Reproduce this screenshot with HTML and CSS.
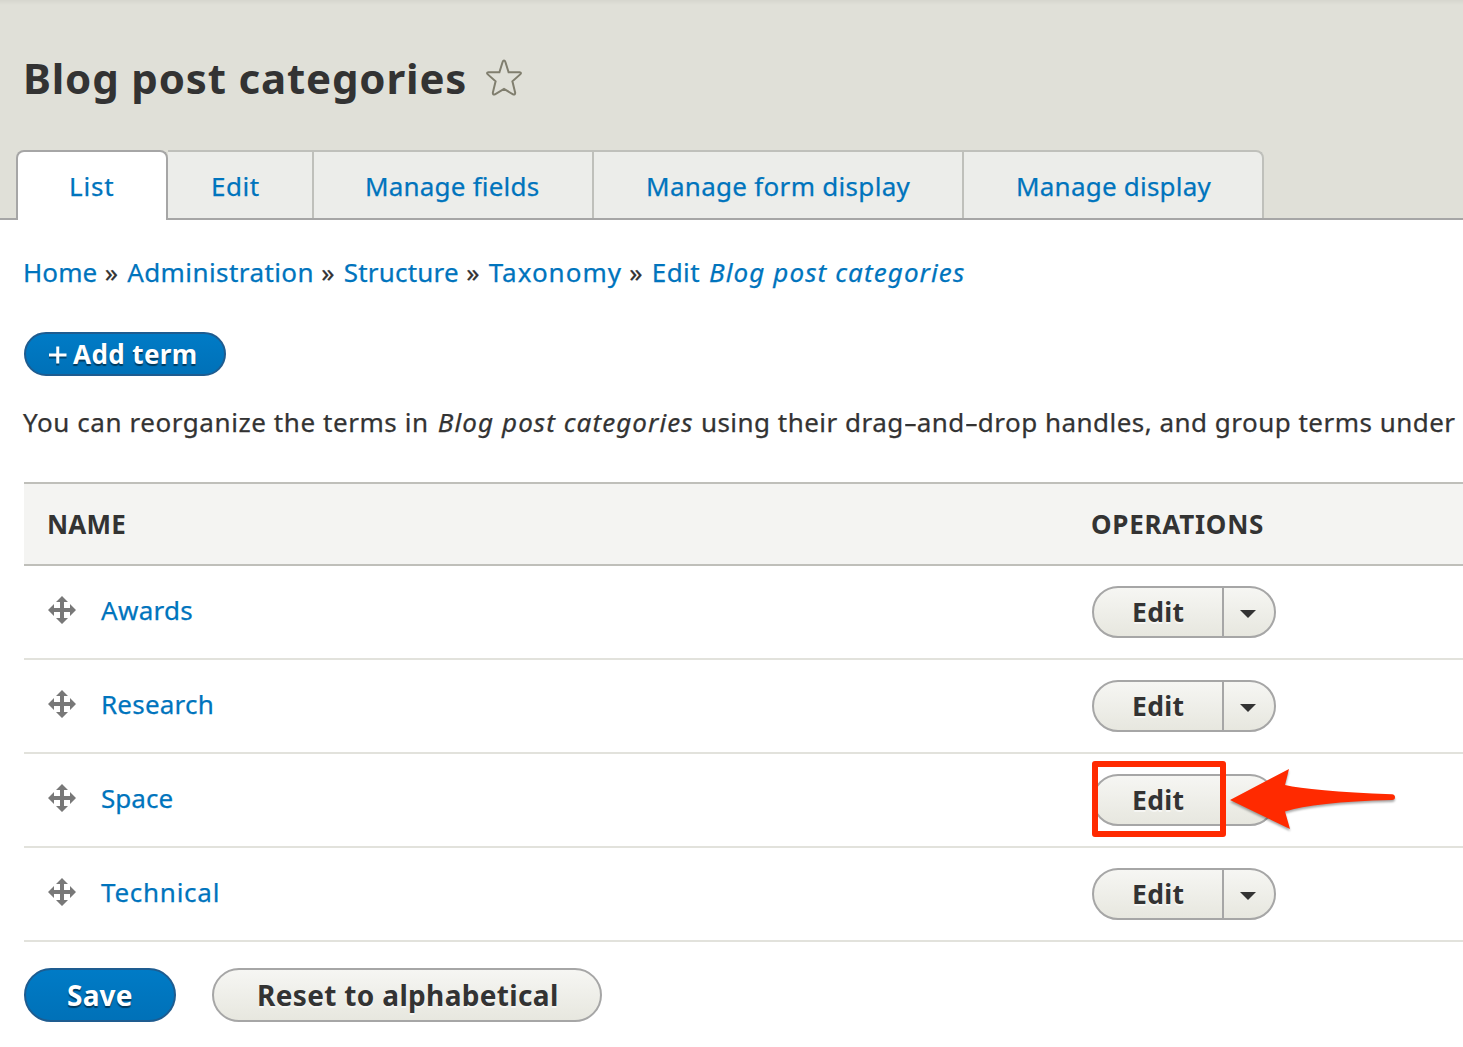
FILE: index.html
```html
<!DOCTYPE html>
<html lang="en">
<head>
<meta charset="utf-8">
<title>Blog post categories</title>
<link rel="stylesheet" href="styles.css">
</head>
<body>
<svg class="defs" width="0" height="0" aria-hidden="true">
  <symbol id="move" viewBox="0 0 28 28"><path d="M14 0L20 6H16V12H22V8L28 14L22 20V16H16V22H20L14 28L8 22H12V16H6V20L0 14L6 8V12H12V6H8Z"/></symbol>
</svg>
<header class="page-header">
  <div class="title-row">
    <h1 class="page-title">Blog post categories</h1>
    <svg class="star" width="40" height="40" viewBox="0 0 40 40" aria-hidden="true"><path d="M20 2.500Q20.900 2.500 21.400 4L24.600 14.300H35.600Q38 14.500 36.200 16.400L28.400 23.300L31.200 34.800Q31.200 37.300 29 36.300L20 31L11 36.300Q8.800 37.300 8.800 34.800L11.600 23.300L3.800 16.400Q2 14.500 4.400 14.300H15.400L18.600 4Q19.100 2.500 20 2.500Z"/></svg>
  </div>
  <nav class="tabs">
    <a class="tab tab-list active">List</a>
    <a class="tab tab-edit">Edit</a>
    <a class="tab tab-fields">Manage fields</a>
    <a class="tab tab-form">Manage form display</a>
    <a class="tab tab-display">Manage display</a>
  </nav>
</header>
<main class="content">
  <nav class="breadcrumb"><a class="bc-home">Home</a><span class="sep">»</span><a class="bc-admin">Administration</a><span class="sep">»</span><a class="bc-structure">Structure</a><span class="sep">»</span><a class="bc-taxonomy">Taxonomy</a><span class="sep">»</span><a class="bc-edit">Edit <em>Blog post categories</em></a></nav>
  <a class="button primary add"><svg class="plus" width="18" height="20" viewBox="0 0 18 20" aria-hidden="true"><path d="M0 11H17.500M8.750 2.500V19.500"/></svg>Add term</a>
  <p class="help"><span class="lead">You can reorganize the terms in</span> <em>Blog post categories</em> using their drag<span class="hyphen">-</span>and<span class="hyphen">-</span>drop handles, and group terms under</p>
  <div class="table">
    <div class="row head"><span class="name">NAME</span><span class="ops">OPERATIONS</span></div>
    <div class="row">
      <div class="name"><svg class="handle" width="28" height="28"><use href="#move"/></svg><a class="term awards">Awards</a></div>
      <div class="dropbutton"><a class="edit">Edit</a><span class="toggle"></span></div>
    </div>
    <div class="row">
      <div class="name"><svg class="handle" width="28" height="28"><use href="#move"/></svg><a class="term research">Research</a></div>
      <div class="dropbutton"><a class="edit">Edit</a><span class="toggle"></span></div>
    </div>
    <div class="row">
      <div class="name"><svg class="handle" width="28" height="28"><use href="#move"/></svg><a class="term space">Space</a></div>
      <div class="dropbutton"><a class="edit">Edit</a><span class="toggle"></span>
        <span class="highlight"></span>
        <svg class="pointer" width="172" height="70" viewBox="0 0 172 70" aria-hidden="true"><path d="M2 35L61 4L57 20Q82 26 164 29.300Q167 29.700 167 32.300Q167 35 164 35Q86 37 57 46.500L62 64Z"/></svg>
      </div>
    </div>
    <div class="row">
      <div class="name"><svg class="handle" width="28" height="28"><use href="#move"/></svg><a class="term technical">Technical</a></div>
      <div class="dropbutton"><a class="edit">Edit</a><span class="toggle"></span></div>
    </div>
  </div>
  <div class="actions"><a class="button primary save">Save</a><a class="button reset">Reset to alphabetical</a></div>
</main>
</body>
</html>
```
FILE: styles.css
```css
*{box-sizing:border-box}
html{overflow:hidden}
body{margin:0;font:26px/36px "Noto Sans",sans-serif;color:#333;background:#fff}
a{color:#0074bd;text-decoration:none}
.defs{display:block;height:0}

.page-header{height:220px;padding:50px 0 0 16px;border-bottom:2px solid #a6a6a6;background:linear-gradient(#d6d6ce,#e0e0d8 5px)}
.title-row{display:flex;align-items:center;height:56px;padding-left:7px;margin-bottom:44px}
.page-title{width:461px;margin:0;font-size:42px;line-height:56px;font-weight:700;letter-spacing:.83px;white-space:nowrap}
.star{fill:none;stroke:#807e6e;stroke-width:2;flex:none}

.tabs{display:flex;height:70px}
.tab{height:68px;padding-top:1px;line-height:67px;border-top:2px solid #bfc0bb;border-right:2px solid #bfc0bb;background:#ecedea;white-space:nowrap}
.tab.active{height:70px;border:2px solid #a6a6a6;border-bottom:0;border-radius:8px 8px 0 0;background:#fff}
.tab-list{width:152px;padding-left:51px;letter-spacing:.8px}
.tab-edit{width:146px;padding-left:43px;letter-spacing:.5px}
.tab-fields{width:280px;padding-left:51px;letter-spacing:.2px}
.tab-form{width:370px;padding-left:52px;letter-spacing:.3px}
.tab-display{width:300px;padding-left:52px;letter-spacing:.22px;border-top-right-radius:8px}
.tab,.breadcrumb,.help,.term{-webkit-text-stroke:.25px currentColor}

.content{padding:34px 0 0 24px}
.breadcrumb{display:flex;margin-left:-1px;white-space:nowrap}
.sep{width:29.8px;padding-right:2px;text-align:center}
.bc-home{letter-spacing:.1px}
.bc-admin{letter-spacing:.42px}
.bc-structure{letter-spacing:.2px}
.bc-taxonomy{letter-spacing:1px}
.bc-edit{letter-spacing:.4px}
.bc-edit em{margin-left:2px;letter-spacing:1.1px}

.button{display:inline-flex;align-items:center;height:54px;border:2px solid #a6a6a6;border-radius:27px;background:linear-gradient(#f6f6f3,#e7e7df);color:#333;font-size:28px;font-weight:700;text-shadow:0 2px 0 rgba(255,255,255,.6);white-space:nowrap}
.button.primary{border-color:#1e5c90;background:linear-gradient(#007bc6,#0071b8);color:#fff;text-shadow:0 2px 1px rgba(0,0,0,.5)}
.add{display:flex;width:202px;height:44px;margin-top:42px;padding-left:23px;font-size:26px;letter-spacing:.4px}
.plus{margin-right:6px;fill:none;stroke:#fff;stroke-width:3;filter:drop-shadow(0 2px 0 rgba(0,0,0,.4))}

.help{margin:28px 0 42px -1px;letter-spacing:.48px;white-space:nowrap}
.lead{letter-spacing:.57px}
.help em{margin-left:2px;letter-spacing:1.08px}
.hyphen{display:inline-block;width:13px;text-align:center;letter-spacing:0;transform:scaleX(1.6)}

.row{display:grid;grid-template-columns:1044px 1fr;align-items:center;height:94px;padding-left:24px;border-bottom:2px solid #e2e2dc}
.row.head{height:84px;border-top:2px solid #bfbfba;border-bottom-color:#bfbfba;background:#f4f4f2;font-weight:700}
.head .name{margin-left:-1px;letter-spacing:.2px}
.head .ops{margin-left:-1px;letter-spacing:.75px}
div.name{display:flex;align-items:center;gap:25px;padding-bottom:4px}
.handle{fill:#787878}
.awards{letter-spacing:.3px}
.research{letter-spacing:.2px}
.space{letter-spacing:.05px}
.technical{letter-spacing:.75px}

.dropbutton{position:relative;display:flex;width:184px;height:52px;border:2px solid #a6a6a6;border-radius:26px;background:linear-gradient(#f6f6f3,#e7e7df)}
.edit{width:130px;padding-left:38px;border-right:2px solid #a6a6a6;color:#333;font-size:26.5px;line-height:49px;font-weight:700;letter-spacing:.3px;text-shadow:0 2px 0 rgba(255,255,255,.6)}
.toggle{width:16px;height:8px;margin:22px 0 0 16px;background:#333;clip-path:polygon(0 0,100% 0,50% 100%)}
.highlight{position:absolute;left:-2px;top:-15px;width:134px;height:76px;border:6px solid #ff2a00;border-radius:3px}
.pointer{position:absolute;left:134px;top:-11px;fill:#ff2a00;filter:drop-shadow(0 2px 1px rgba(0,0,0,.35))}

.actions{display:flex;gap:36px;margin-top:26px}
.save{width:152px;padding-left:41px;letter-spacing:.2px}
.reset{width:390px;padding-left:43px;letter-spacing:.34px}
```
